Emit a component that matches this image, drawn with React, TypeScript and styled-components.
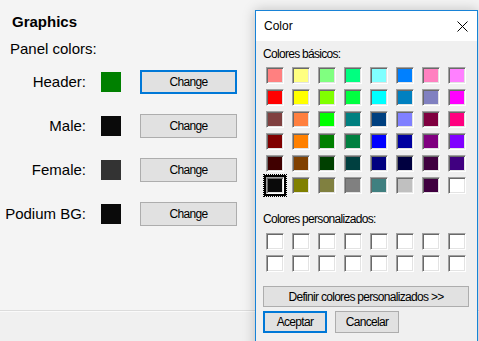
import React from 'react'
import styled, { createGlobalStyle, css } from 'styled-components'

const GlobalStyle = createGlobalStyle`
	html, body {
		margin: 0;
		padding: 0;
		overflow: hidden;
		background: #f4f4f4;
	}
	* {
		box-sizing: border-box;
	}
`

const Screen = styled.div`
	position: relative;
	width: 479px;
	height: 341px;
	overflow: hidden;
	font-family: 'Liberation Sans', Arial, sans-serif;
	color: #000;
`

const Panel = styled.div`
	height: 311px;
	background: #f4f4f4;
	padding-top: 13px;
	border-bottom: 1px solid #dcdcdc;
`

const Heading = styled.div`
	padding-left: 12px;
	font-size: 15px;
	font-weight: bold;
	line-height: 18px;
`

const SubHeading = styled.div`
	margin-top: 9px;
	padding-left: 10px;
	font-size: 15px;
	line-height: 18px;
`

const ColorRows = styled.div`
	margin-top: 12px;
	display: grid;
	grid-template-columns: 101px 39px 97px;
	grid-auto-rows: 24px;
	row-gap: 20px;
	align-items: center;
`

const RowLabel = styled.div`
	padding-right: 15px;
	text-align: right;
	font-size: 15px;
	line-height: 18px;
`

const Swatch = styled.div<{ $color: string }>`
	width: 20px;
	height: 20px;
	background: ${p => p.$color};
`

const WinButton = styled.button<{ $focused?: boolean }>`
	height: 24px;
	margin: 0;
	padding: 0;
	background: #e1e1e1;
	border: 1px solid #adadad;
	font-family: 'Liberation Sans', Arial, sans-serif;
	font-size: 12px;
	letter-spacing: -0.7px;
	color: #000;
	${p =>
		p.$focused &&
		css`
			border: 2px solid #0078d7;
		`}
`

const Footer = styled.div`
	height: 30px;
	background: #f0f0f0;
	border-top: 1px solid #fafafa;
`

const Dialog = styled.div`
	position: absolute;
	left: 255px;
	top: 10px;
	width: 223px;
	height: 345px;
	border: 1px solid #1883d7;
	background: #f0f0f0;
	box-shadow: 0 0 12px rgba(0, 0, 0, 0.22);
	display: flex;
	flex-direction: column;
`

const TitleBar = styled.div`
	height: 30px;
	background: #fff;
	display: flex;
	align-items: center;
	justify-content: space-between;
	padding: 0 9px 0 8px;
	font-size: 12px;
`

const DialogBody = styled.div`
	padding: 6px 8px 0 7px;
	font-size: 12px;
	letter-spacing: -0.7px;
`

const SectionLabel = styled.div<{ $gap: number }>`
	margin-top: ${p => p.$gap}px;
	line-height: 14px;
`

const Grid = styled.div<{ $gap: number }>`
	margin: ${p => p.$gap}px 0 0 3px;
	display: grid;
	grid-template-columns: repeat(8, 18px);
	grid-auto-rows: 17px;
	column-gap: 8px;
	row-gap: 5px;
`

const Cell = styled.div<{ $color: string; $selected?: boolean }>`
	position: relative;
	background: ${p => p.$color};
	border: 1px solid;
	border-color: #a0a0a0 #fff #fff #a0a0a0;
	box-shadow: inset 1px 1px 0 #696969, inset -1px -1px 0 #e3e3e3;
	${p =>
		p.$selected &&
		css`
			outline: 2px solid #000;
			&::after {
				content: '';
				position: absolute;
				inset: -4px;
				border: 1px dotted #000;
			}
		`}
`

const WideButton = styled.button`
	display: block;
	width: 206px;
	height: 21px;
	margin-top: 14px;
	padding: 0;
	background: #e1e1e1;
	border: 1px solid #adadad;
	font-family: inherit;
	font-size: 12px;
	letter-spacing: -0.7px;
	color: #000;
`

const ButtonRow = styled.div`
	margin-top: 4px;
	display: flex;
	gap: 8px;
`

const DialogButton = styled(WinButton)`
	width: 64px;
	height: 22px;
`

const basic = [
	['#ff8080', '#ffff80', '#80ff80', '#00ff80', '#80ffff', '#0080ff', '#ff80c0', '#ff80ff'],
	['#ff0000', '#ffff00', '#80ff00', '#00ff40', '#00ffff', '#0080c0', '#8080c0', '#ff00ff'],
	['#804040', '#ff8040', '#00ff00', '#008080', '#004080', '#8080ff', '#800040', '#ff0080'],
	['#800000', '#ff8000', '#008000', '#008040', '#0000ff', '#0000a0', '#800080', '#8000ff'],
	['#400000', '#804000', '#004000', '#004040', '#000080', '#000040', '#400040', '#400080'],
	['#0a0a0a', '#808000', '#808040', '#808080', '#408080', '#c0c0c0', '#400040', '#ffffff'],
]

const panelColors = [
	{ label: 'Header:', color: '#008000', focused: true },
	{ label: 'Male:', color: '#0a0a0a' },
	{ label: 'Female:', color: '#333333' },
	{ label: 'Podium BG:', color: '#0a0a0a' },
]

function CloseIcon() {
	return (
		<svg width='11' height='11' viewBox='0 0 11 11'>
			<path d='M0.5 0.5 L10.5 10.5 M10.5 0.5 L0.5 10.5' stroke='#000' strokeWidth='1' fill='none' />
		</svg>
	)
}

export default function App() {
	return (
		<Screen>
			<GlobalStyle />
			<Panel>
				<Heading>Graphics</Heading>
				<SubHeading>Panel colors:</SubHeading>
				<ColorRows>
					{panelColors.map(row => (
						<React.Fragment key={row.label}>
							<RowLabel>{row.label}</RowLabel>
							<Swatch $color={row.color} />
							<WinButton $focused={row.focused}>Change</WinButton>
						</React.Fragment>
					))}
				</ColorRows>
			</Panel>
			<Footer />

			<Dialog>
				<TitleBar>
					<span>Color</span>
					<CloseIcon />
				</TitleBar>
				<DialogBody>
					<SectionLabel $gap={0}>Colores básicos:</SectionLabel>
					<Grid $gap={6}>
						{basic.flat().map((c, i) => (
							<Cell key={i} $color={c} $selected={i === 40} />
						))}
					</Grid>
					<SectionLabel $gap={18}>Colores personalizados:</SectionLabel>
					<Grid $gap={7}>
						{Array.from({ length: 16 }).map((_, i) => (
							<Cell key={i} $color='#fff' />
						))}
					</Grid>
					<WideButton>Definir colores personalizados &gt;&gt;</WideButton>
					<ButtonRow>
						<DialogButton $focused>Aceptar</DialogButton>
						<DialogButton>Cancelar</DialogButton>
					</ButtonRow>
				</DialogBody>
			</Dialog>
		</Screen>
	)
}
